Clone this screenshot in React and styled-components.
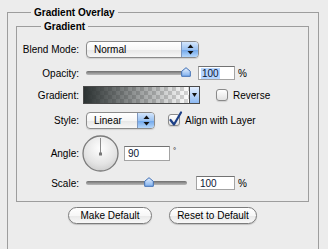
import React from 'react'
import styled, { createGlobalStyle } from 'styled-components'

const GlobalStyle = createGlobalStyle`
  html, body { margin: 0; padding: 0; background: #ececec; }
  body {
    font-family: "Liberation Sans", Arial, sans-serif;
    font-size: 10px;
    color: #000;
  }
`

const Page = styled.div`
  width: 328px;
  height: 249px;
  overflow: hidden;
  box-sizing: border-box;
  padding: 6px 9px 0 7px;
`

const Panel = styled.fieldset`
  margin: 0;
  width: 312px;
  height: 270px;
  box-sizing: border-box;
  border: 1px solid #9d9d9d;
  padding: 1px 9px 0 8px;
  min-width: 0;
`

const Legend = styled.legend`
  font-weight: bold;
  font-size: 10px;
  line-height: 13px;
  padding: 0 3px;
  margin-left: ${p => p.$ml}px;
`

const Group = styled.fieldset`
  margin: 0;
  border: 1px solid #9d9d9d;
  padding: 0 0 11px 0;
  min-width: 0;
`

const Row = styled.div`
  display: flex;
  align-items: center;
  height: ${p => p.$h}px;
  margin-top: ${p => p.$mt}px;
`

const Label = styled.span`
  width: 69px;
  flex-shrink: 0;
  box-sizing: border-box;
  padding-right: 7px;
  text-align: right;
  white-space: nowrap;
`

const Select = styled.div`
  width: ${p => p.$w}px;
  height: 17px;
  box-sizing: border-box;
  display: flex;
  border: 1px solid #8b8b8b;
  border-radius: 4px;
  overflow: hidden;
  background: linear-gradient(#ffffff, #f6f6f6 50%, #e6e6e6 51%, #f7f7f7);
  box-shadow: 0 1px 1px rgba(0, 0, 0, 0.12);
`

const SelectText = styled.span`
  flex: 1;
  padding-left: 7px;
  line-height: 15px;
`

const SelectArrows = styled.span`
  width: 16px;
  border-left: 1px solid #7f97bd;
  background: linear-gradient(#d4e6fc, #9cc3f2 50%, #6ea5ea 51%, #b5d7fb);
  display: flex;
  align-items: center;
  justify-content: center;
`

const Slider = styled.div`
  position: relative;
  width: 101px;
  height: 14px;
  flex-shrink: 0;
`

const Track = styled.div`
  position: absolute;
  left: 0;
  right: 0;
  top: 5px;
  height: 4px;
  border-radius: 2px;
  background: linear-gradient(#6d6d6d, #9c9c9c 60%, #b9b9b9);
`

const Thumb = styled.svg`
  position: absolute;
  top: 1px;
  left: ${p => p.$pos * 99 - 4}px;
`

const NumBox = styled.div`
  width: ${p => p.$w}px;
  height: ${p => p.$h}px;
  box-sizing: border-box;
  margin-left: ${p => p.$ml}px;
  background: #fff;
  border: 1px solid #a3a3a3;
  border-top-color: #727272;
  padding: 0 0 0 2px;
  display: flex;
  align-items: center;
  color: #0c1733;
`

const Selected = styled.span`
  background: ${p => (p.$on ? '#b5d5ff' : 'transparent')};
  line-height: 11px;
  padding: 0 1px;
`

const Unit = styled.span`
  margin-left: 3px;
  align-self: ${p => (p.$top ? 'flex-start' : 'center')};
  font-size: ${p => (p.$top ? 8 : 10)}px;
  margin-top: ${p => (p.$top ? 11 : 0)}px;
`

const GradientBar = styled.div`
  width: 117px;
  height: 18px;
  margin-left: -3px;
  box-sizing: border-box;
  display: flex;
  border: 1px solid #4a4a4a;
`

const GradientFill = styled.div`
  flex: 1;
  background:
    linear-gradient(to right, rgba(44, 50, 50, 1), rgba(44, 50, 50, 0)),
    repeating-conic-gradient(#ffffff 0 25%, #d6d6d6 0 50%) 0 0 / 8px 8px;
`

const GradientArrow = styled.div`
  width: 9px;
  border-left: 1px solid #4a4a4a;
  background: linear-gradient(#e4efff, #8db9f2);
  display: flex;
  align-items: center;
  justify-content: center;
`

const CheckItem = styled.label`
  display: flex;
  align-items: center;
  margin-left: ${p => p.$ml}px;
  gap: 5px;
  white-space: nowrap;
`

const Box = styled.span`
  position: relative;
  width: 12px;
  height: 12px;
  box-sizing: border-box;
  border: 1px solid #8a8a8a;
  border-radius: 3px;
  background: linear-gradient(#ffffff, #f1f1f1 50%, #e2e2e2);
  box-shadow: 0 1px 1px rgba(0, 0, 0, 0.12);
`

const Tick = styled.svg`
  position: absolute;
  left: -1px;
  top: -4px;
`

const Dial = styled.svg`
  margin-left: -4px;
  flex-shrink: 0;
`

const Buttons = styled.div`
  display: flex;
  justify-content: center;
  gap: 17px;
  margin-top: 5px;
`

const Button = styled.button`
  width: ${p => p.$w}px;
  height: 17px;
  padding: 0;
  border: 1px solid #7c7c7c;
  border-radius: 9px;
  background: linear-gradient(#ffffff, #f7f7f7 50%, #e8e8e8 51%, #f8f8f8);
  box-shadow: 0 1px 1px rgba(0, 0, 0, 0.18);
  font-family: "Liberation Sans", Arial, sans-serif;
  font-size: 10px;
  color: #000;
`

const Arrows = () => (
  <svg width="7" height="11" viewBox="0 0 7 11">
    <path d="M3.5 0.5 L6.5 4 L0.5 4 Z" fill="#111" />
    <path d="M3.5 10.5 L6.5 7 L0.5 7 Z" fill="#111" />
  </svg>
)

const SliderThumb = ({ pos }) => (
  <Thumb $pos={pos} width="10" height="10" viewBox="0 0 10 10">
    <defs>
      <linearGradient id="th" x1="0" y1="0" x2="0" y2="1">
        <stop offset="0" stopColor="#eaf3ff" />
        <stop offset="1" stopColor="#7fb0ee" />
      </linearGradient>
    </defs>
    <path d="M5 0.7 L9.3 4.3 L9.3 9.3 L0.7 9.3 L0.7 4.3 Z" fill="url(#th)" stroke="#3f6fb5" strokeWidth="1" />
  </Thumb>
)

const Checkbox = ({ checked, label, ml }) => (
  <CheckItem $ml={ml}>
    <Box>
      {checked && (
        <Tick width="15" height="16" viewBox="0 0 15 16">
          <path d="M2.5 9 L6 13.5 L13 1.5" fill="none" stroke="#1c3f86" strokeWidth="2.2" strokeLinejoin="round" strokeLinecap="round" />
        </Tick>
      )}
    </Box>
    {label}
  </CheckItem>
)

const AngleDial = () => (
  <Dial width="37" height="37" viewBox="0 0 37 37">
    <defs>
      <radialGradient id="dl" cx="0.5" cy="0.35" r="0.65">
        <stop offset="0" stopColor="#ffffff" />
        <stop offset="0.7" stopColor="#e4e4e4" />
        <stop offset="1" stopColor="#cfcfcf" />
      </radialGradient>
    </defs>
    <circle cx="18.5" cy="18.5" r="17.5" fill="url(#dl)" stroke="#7b7b7b" strokeWidth="1.3" />
    <line x1="18.5" y1="3" x2="18.5" y2="19" stroke="#8a8a8a" strokeWidth="1" />
    <rect x="17" y="17.5" width="3" height="3" fill="#777" />
  </Dial>
)

export default function App() {
  return (
    <Page>
      <GlobalStyle />
      <Panel>
        <Legend $ml={15}>Gradient Overlay</Legend>
        <Group>
          <Legend $ml={24}>Gradient</Legend>

          <Row $h={17} $mt={8}>
            <Label>Blend Mode:</Label>
            <Select $w={113}>
              <SelectText>Normal</SelectText>
              <SelectArrows><Arrows /></SelectArrows>
            </Select>
          </Row>

          <Row $h={14} $mt={8}>
            <Label>Opacity:</Label>
            <Slider>
              <Track />
              <SliderThumb pos={1} />
            </Slider>
            <NumBox $w={37} $h={14} $ml={11}>
              <Selected $on>100</Selected>
            </NumBox>
            <Unit>%</Unit>
          </Row>

          <Row $h={18} $mt={6}>
            <Label>Gradient:</Label>
            <GradientBar>
              <GradientFill />
              <GradientArrow>
                <svg width="5" height="4" viewBox="0 0 5 4">
                  <path d="M0 0 L5 0 L2.5 4 Z" fill="#111" />
                </svg>
              </GradientArrow>
            </GradientBar>
            <Checkbox ml={16} label="Reverse" />
          </Row>

          <Row $h={18} $mt={7}>
            <Label>Style:</Label>
            <Select $w={69}>
              <SelectText>Linear</SelectText>
              <SelectArrows><Arrows /></SelectArrows>
            </Select>
            <Checkbox ml={13} checked label="Align with Layer" />
          </Row>

          <Row $h={36} $mt={6}>
            <Label>Angle:</Label>
            <AngleDial />
            <NumBox $w={46} $h={15} $ml={5}>
              <Selected>90</Selected>
            </NumBox>
            <Unit $top>°</Unit>
          </Row>

          <Row $h={14} $mt={5}>
            <Label>Scale:</Label>
            <Slider>
              <Track />
              <SliderThumb pos={0.626} />
            </Slider>
            <NumBox $w={39} $h={14} $ml={9}>
              <Selected>100</Selected>
            </NumBox>
            <Unit>%</Unit>
          </Row>
        </Group>

        <Buttons>
          <Button $w={84}>Make Default</Button>
          <Button $w={88}>Reset to Default</Button>
        </Buttons>
      </Panel>
    </Page>
  )
}
